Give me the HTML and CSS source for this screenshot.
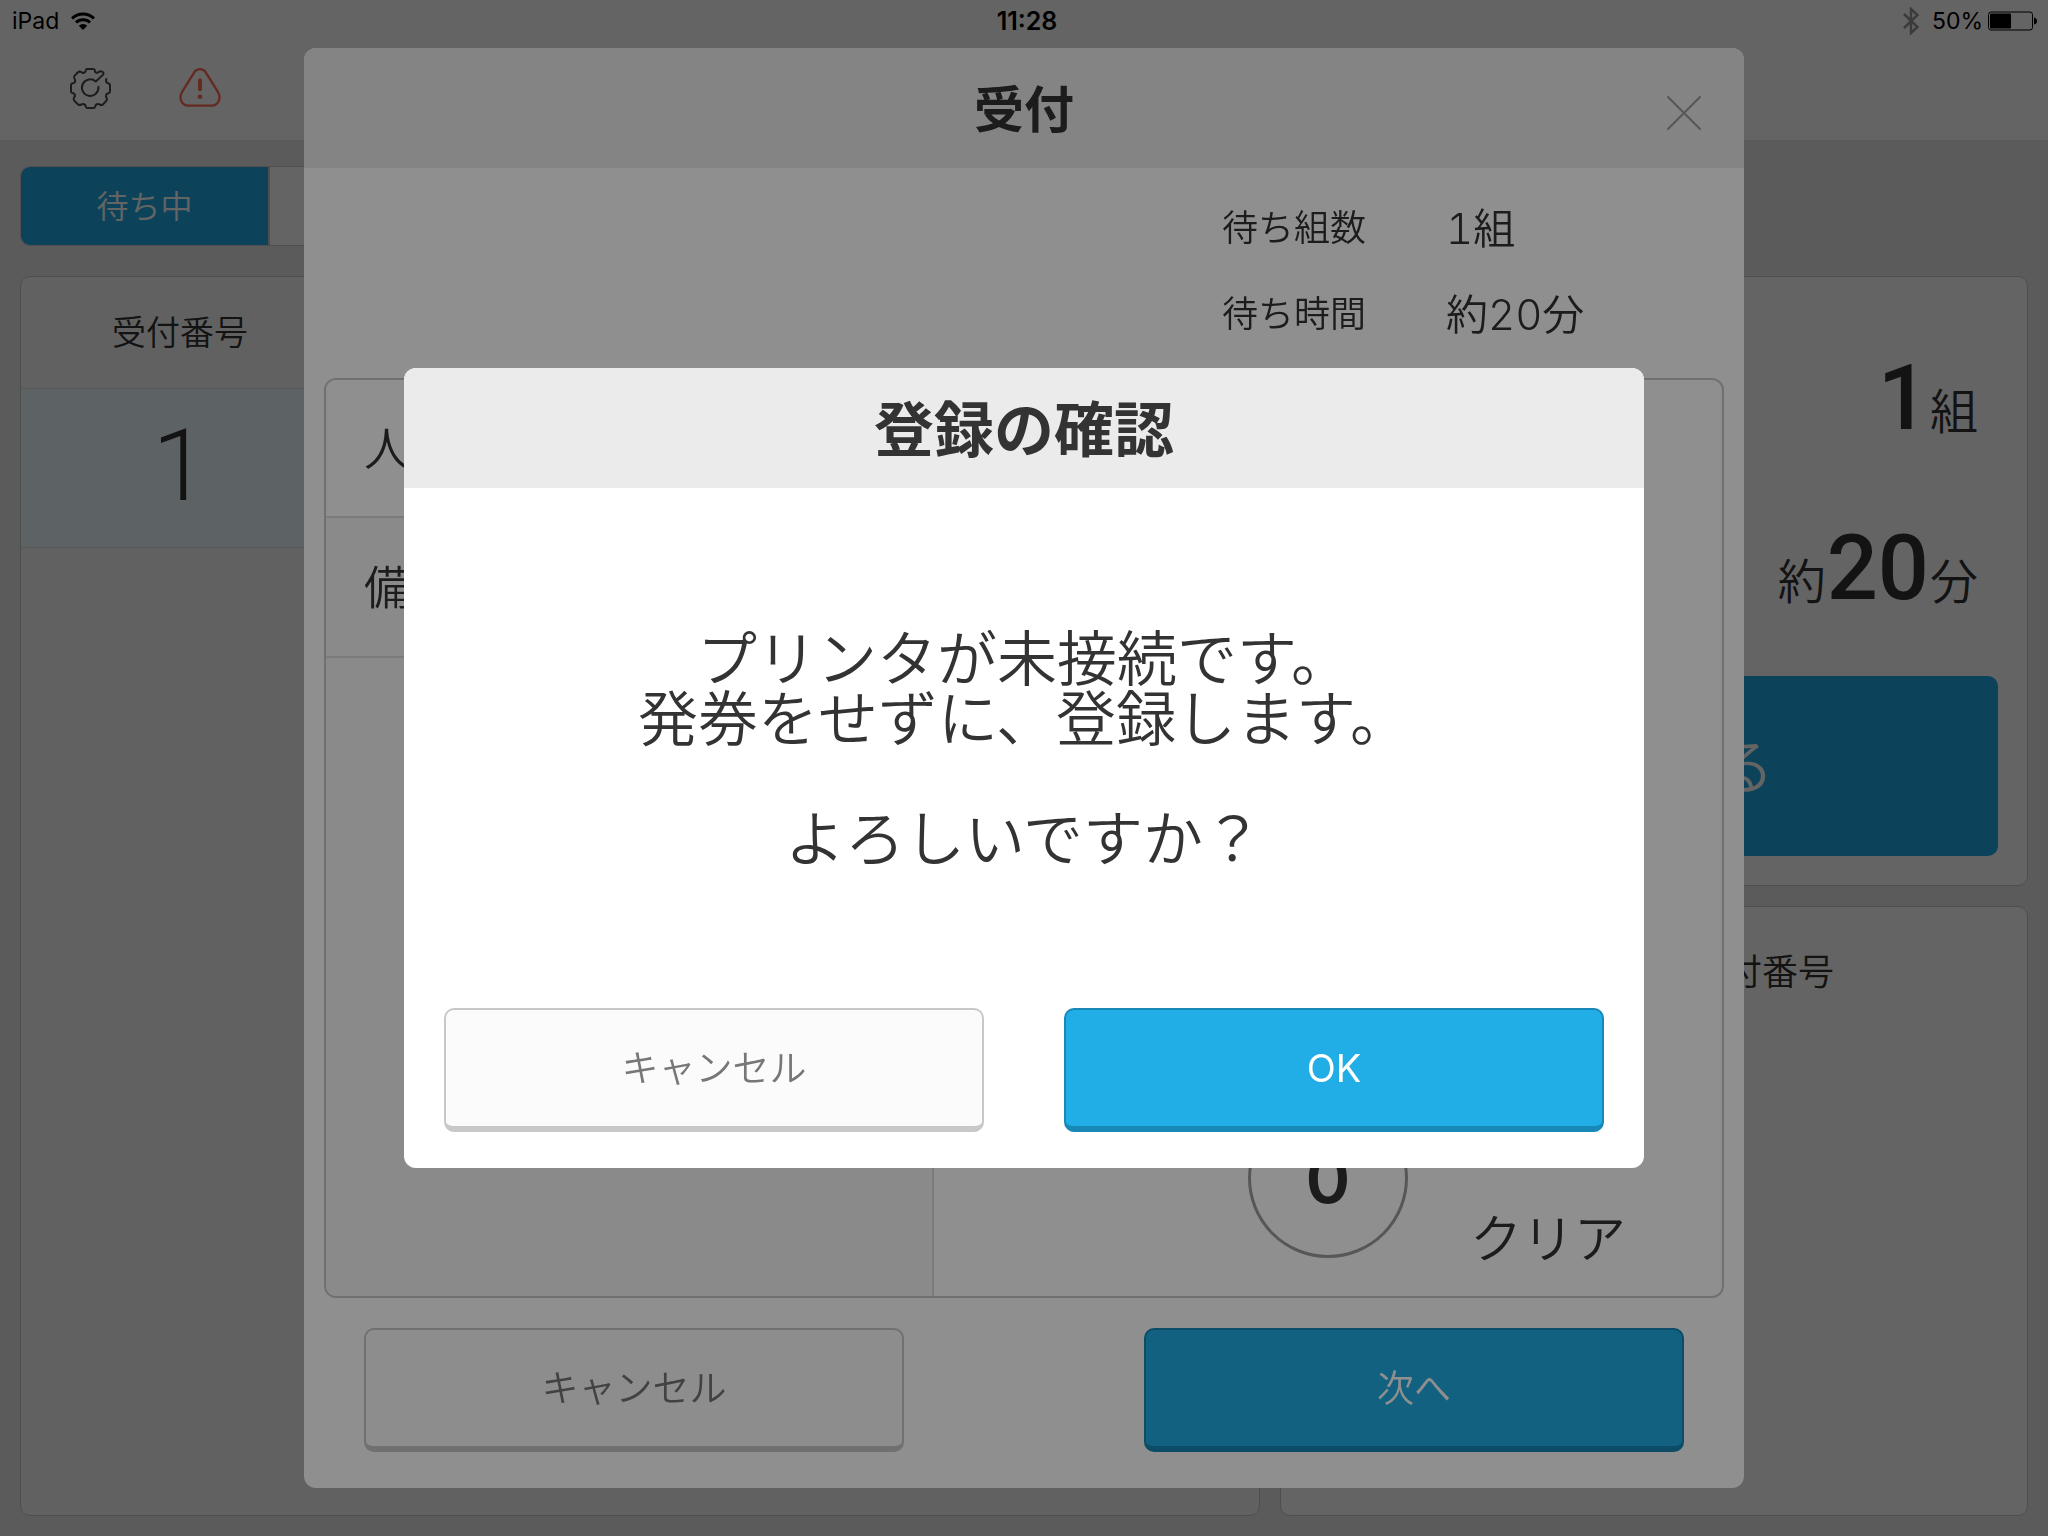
FILE: index.html
```html
<!DOCTYPE html>
<html lang="ja">
<head>
    <meta charset="UTF-8">
    <meta name="viewport" content="width=device-width, initial-scale=1.0">
    <title>受付</title>
    <link rel="stylesheet" href="styles.css">
</head>
<body>

    <div class="app">
        <div class="status-bar">
            <div class="status-left">
                <span>iPad</span>
                <svg class="wifi" viewBox="0 0 24 18" fill="none" stroke="#000" stroke-width="3">
                    <path d="M1 6.500A15.500 15.500 0 0 1 23 6.500"/>
                    <path d="M5 10.500A10 10 0 0 1 19 10.500"/>
                    <path d="M12 18L7.800 13.800A6 6 0 0 1 16.200 13.800Z" fill="#000" stroke="none"/>
                </svg>
            </div>
            <div class="status-time">11:28</div>
            <div class="status-right">
                <svg class="bluetooth" viewBox="0 0 16 28" fill="none" stroke="#999" stroke-width="2.500">
                    <path d="M1 7L14.500 20L8 26V2L14.500 8L1 21"/>
                </svg>
                <span>50%</span>
                <svg class="battery" viewBox="0 0 50 20">
                    <rect x="0.500" y="1" width="44" height="18" rx="2.500" fill="none" stroke="#000"/>
                    <rect x="2" y="2.500" width="21" height="15" rx="1"/>
                    <path d="M46 6.500Q49 7 49 10T46 13.500Z"/>
                </svg>
            </div>
        </div>

        <div class="toolbar">
            <button class="icon-button" aria-label="設定">
                <svg class="gear" viewBox="0 0 124 124" fill="none" stroke="#4a4a4a" stroke-width="6" stroke-linecap="round" stroke-linejoin="round">
                    <path d="M86 57A25 25 0 1 1 78 41L100 20Q104 14 97 11Q91 8 86 13Q80 16 76 12L75 6Q74 3 70 3L52 3Q48 3 48 7L46 12Q40 17 35 13Q29 9 24 13L14 23Q10 28 14 33Q18 40 13 45L6 47Q3 48 3 52L3 70Q3 75 8 76L13 78Q17 83 13 88Q9 94 13 99L24 110Q29 114 35 110Q41 107 46 112L48 117Q49 121 53 121L71 121Q75 121 76 117L78 112Q83 107 89 110Q95 114 100 110L110 99Q114 94 110 89Q107 82 112 78L117 76Q121 75 121 70L121 52Q121 48 117 47L112 45Q107 40 110 33"/>
                </svg>
            </button>
            <button class="icon-button" aria-label="警告">
                <svg class="warning" viewBox="0 0 126 118" fill="none" stroke="currentColor" stroke-width="7" stroke-linecap="round">
                    <path d="M45 14C53 0 73 0 81 14L118 74C128 92 118 114 98 114L28 114C8 114 -2 92 8 74Z"/>
                    <path d="M63 37V64" stroke-width="12"/>
                    <circle cx="63" cy="87" r="7" fill="currentColor" stroke="none"/>
                </svg>
            </button>
        </div>

        <main class="main">
            <div class="tabs">
                <button class="tab active">待ち中</button>
                <button class="tab">案内済み</button>
            </div>

            <div class="columns">
                <section class="panel list-panel">
                    <table class="list">
                        <thead>
                            <tr><th>受付番号</th><th></th><th></th><th></th></tr>
                        </thead>
                        <tbody>
                            <tr><td>1</td><td></td><td></td><td></td></tr>
                        </tbody>
                    </table>
                </section>

                <div class="side">
                    <section class="panel summary">
                        <p class="summary-line"><strong>1</strong>組</p>
                        <p class="summary-line">約<strong>20</strong>分</p>
                        <button class="accept-button">受付する</button>
                    </section>
                    <section class="panel current">
                        <h3>現在案内中の受付番号</h3>
                    </section>
                </div>
            </div>
        </main>
    </div>

    <!-- 受付フォーム -->
    <div class="overlay form-overlay">
        <div class="modal" role="dialog" aria-labelledby="formTitle">
            <header class="modal-header">
                <h2 id="formTitle">受付</h2>
                <button class="close-button" aria-label="閉じる">
                    <svg viewBox="0 0 34 34" stroke="#9b9b9b" stroke-width="2" stroke-linecap="round"><path d="M1 1L33 33M33 1L1 33"/></svg>
                </button>
            </header>

            <dl class="wait-info">
                <dt>待ち組数</dt><dd>1組</dd>
                <dt>待ち時間</dt><dd>約20分</dd>
            </dl>

            <div class="entry">
                <div class="fields">
                    <div class="field selected">人数</div>
                    <div class="field">備考</div>
                </div>
                <div class="keypad">
                    <button class="key zero">0</button>
                    <button class="clear-key">クリア</button>
                </div>
            </div>

            <footer class="actions form-actions">
                <button class="button">キャンセル</button>
                <button class="button primary">次へ</button>
            </footer>
        </div>
    </div>

    <!-- 登録の確認 -->
    <div class="overlay confirm-overlay">
        <div class="modal confirm" role="alertdialog" aria-labelledby="confirmTitle">
            <header class="modal-header">
                <h2 id="confirmTitle">登録の確認</h2>
            </header>
            <p class="message">プリンタが未接続です。<br>発券をせずに、登録します。<br><br>よろしいですか？</p>
            <footer class="actions">
                <button class="button">キャンセル</button>
                <button class="button primary ok">OK</button>
            </footer>
        </div>
    </div>

</body>
</html>
```
FILE: styles.css
```css
* {
    box-sizing: border-box;
}

body {
    margin: 0;
    background-color: #e8e8e8;
    color: #333;
    font-family: "Noto Sans CJK JP", sans-serif;
    font-weight: 350;
}

h2, h3, p, dl, dd {
    margin: 0;
}

button {
    padding: 0;
    border: none;
    background: none;
    color: inherit;
    font: inherit;
    cursor: pointer;
}

svg {
    display: block;
}

.app {
    display: flex;
    flex-direction: column;
    min-height: 100vh;
}

/* status bar */
.status-bar {
    display: grid;
    grid-template-columns: 1fr auto 1fr;
    align-items: center;
    height: 40px;
    padding: 1px 10px 0 12px;
    background-color: #fff;
    color: #000;
    font-family: Inter, sans-serif;
    font-size: 23px;
    font-weight: 400;
}

.status-left, .status-right {
    display: flex;
    align-items: center;
    gap: 12px;
}

.status-right {
    justify-content: flex-end;
    gap: 5px;
}

.status-time {
    padding-left: 4px;
    font-size: 25px;
    font-weight: 600;
}

.wifi {
    width: 24px;
    height: 18px;
}

.bluetooth {
    width: 16px;
    height: 28px;
    margin-right: 8px;
}

.battery {
    width: 50px;
    height: 20px;
}

/* toolbar */
.toolbar {
    display: flex;
    align-items: flex-start;
    gap: 68px;
    height: 100px;
    padding: 28px 70px;
    background-color: #fff;
}

.gear {
    width: 41px;
    height: 41px;
}

.warning {
    width: 42px;
    height: 39px;
    color: #ff6e55;
}

/* main */
.main {
    display: flex;
    flex-direction: column;
    flex: 1;
    gap: 30px;
    padding: 26px 20px 20px;
}

.tabs {
    display: flex;
    align-self: flex-start;
    height: 80px;
    border: 1px solid #c8c8c8;
    border-radius: 10px;
    background-color: #fff;
    overflow: hidden;
}

.tab {
    width: 249px;
    padding-bottom: 4px;
    font-size: 32px;
}

.tab.active {
    background-color: #21ade5;
    border-right: 2px solid #c8c8c8;
    color: #fff;
}

.columns {
    display: grid;
    grid-template-columns: 1240fr 748fr;
    flex: 1;
    gap: 20px;
}

.panel {
    border: 1px solid #c8c8c8;
    border-radius: 10px;
    background-color: #fff;
}

.list-panel {
    background-color: #f8f8f8;
    overflow: hidden;
}

.list {
    width: 100%;
    border-collapse: collapse;
    table-layout: fixed;
    text-align: center;
}

.list th {
    height: 111px;
    padding: 0 0 4px;
    border-bottom: 1px solid #dcdcdc;
    font-size: 34px;
    font-weight: 350;
}

.list th:first-child {
    width: 318px;
}

.list td {
    height: 159px;
    padding: 0 0 4px;
    border-bottom: 1px solid #dcdcdc;
    background-color: #f0fbff;
    font-family: Roboto, sans-serif;
    font-size: 100px;
    font-weight: 300;
    line-height: 1;
}

.side {
    display: flex;
    flex-direction: column;
    gap: 20px;
}

.summary {
    height: 610px;
    padding: 47px 29px 29px;
    display: flex;
    flex-direction: column;
}

.summary-line {
    height: 170px;
    padding-right: 20px;
    font-size: 48px;
    line-height: 150px;
    text-align: right;
}

.summary-line strong {
    margin: 0 1px;
    font-family: Roboto, sans-serif;
    font-size: 90px;
    font-weight: 500;
}

.accept-button {
    height: 180px;
    margin-top: auto;
    padding-bottom: 8px;
    border-radius: 10px;
    background-color: #21ade5;
    color: #fff;
    font-size: 60px;
}

.current {
    flex: 1;
    padding: 36px 20px;
    text-align: center;
}

.current h3 {
    font-size: 36px;
    font-weight: 350;
}

/* overlays */
.overlay {
    position: fixed;
    inset: 0;
    display: flex;
    align-items: center;
    justify-content: center;
}

.form-overlay {
    background-color: rgba(0, 0, 0, 0.3);
}

.confirm-overlay {
    background-color: rgba(0, 0, 0, 0.44);
}

.modal {
    width: 94%;
    max-width: 1440px;
    border-radius: 12px;
    background-color: #fff;
    overflow: hidden;
}

.modal-header {
    position: relative;
    display: flex;
    align-items: center;
    justify-content: center;
    height: 120px;
    padding-bottom: 4px;
    background-color: #ebebeb;
}

.modal-header h2 {
    font-size: 50px;
    font-weight: 700;
    line-height: 1;
}

.close-button {
    position: absolute;
    top: 48px;
    right: 43px;
    width: 34px;
    height: 34px;
}

.wait-info {
    display: grid;
    grid-template-columns: 144px 200px;
    grid-auto-rows: 86px;
    column-gap: 80px;
    align-items: center;
    justify-content: end;
    height: 210px;
    padding: 14px 98px 24px 0;
    font-family: Inter, "Noto Sans CJK JP", sans-serif;
}

.wait-info dt {
    font-size: 36px;
    white-space: nowrap;
}

.wait-info dd {
    font-size: 42px;
    font-variant-numeric: tabular-nums;
}

.entry {
    display: flex;
    min-height: 920px;
    margin: 0 20px;
    border: 2px solid #c8c8c8;
    border-radius: 12px;
    overflow: hidden;
}

.fields {
    flex: 0 0 608px;
    border-right: 2px solid #dcdcdc;
    background-color: #f7f7f7;
}

.field {
    display: flex;
    align-items: center;
    height: 140px;
    padding: 0 38px 6px;
    border-bottom: 2px solid #dcdcdc;
    font-size: 46px;
}

.field.selected {
    height: 138px;
    background-color: #fff;
}

.keypad {
    display: grid;
    grid-template-columns: repeat(3, 160px);
    gap: 20px 60px;
    align-content: end;
    justify-content: center;
    flex: 1;
    padding-bottom: 38px;
}

.key {
    height: 160px;
    border: 3px solid #9b9b9b;
    border-radius: 50%;
    font-family: Inter, sans-serif;
    font-size: 68px;
    font-weight: 600;
}

.key.zero {
    grid-column: 2;
}

.clear-key {
    align-self: end;
    font-size: 52px;
    line-height: 44px;
}

.actions {
    display: flex;
    justify-content: space-between;
    gap: 80px;
    padding: 0 40px 36px;
}

.form-actions {
    padding: 30px 60px 36px;
}

.button {
    width: 540px;
    height: 124px;
    padding-bottom: 4px;
    border: 2px solid #c8c8c8;
    border-bottom-width: 6px;
    border-radius: 10px;
    background-color: #fbfbfb;
    color: #777;
    font-size: 37px;
}

.button.primary {
    border-color: #1888b6;
    background-color: #21ade5;
    color: #fff;
}

.button.ok {
    padding-bottom: 0;
    font-family: Inter, sans-serif;
    font-size: 38px;
    font-weight: 400;
}

/* confirm dialog */
.confirm {
    display: flex;
    flex-direction: column;
    width: 90%;
    max-width: 1240px;
    min-height: 800px;
}

.confirm h2 {
    font-size: 60px;
}

.message {
    display: flow-root;
    flex: 1;
    padding: 137px 40px;
    font-size: 60px;
    line-height: 60px;
    text-align: center;
}
```
